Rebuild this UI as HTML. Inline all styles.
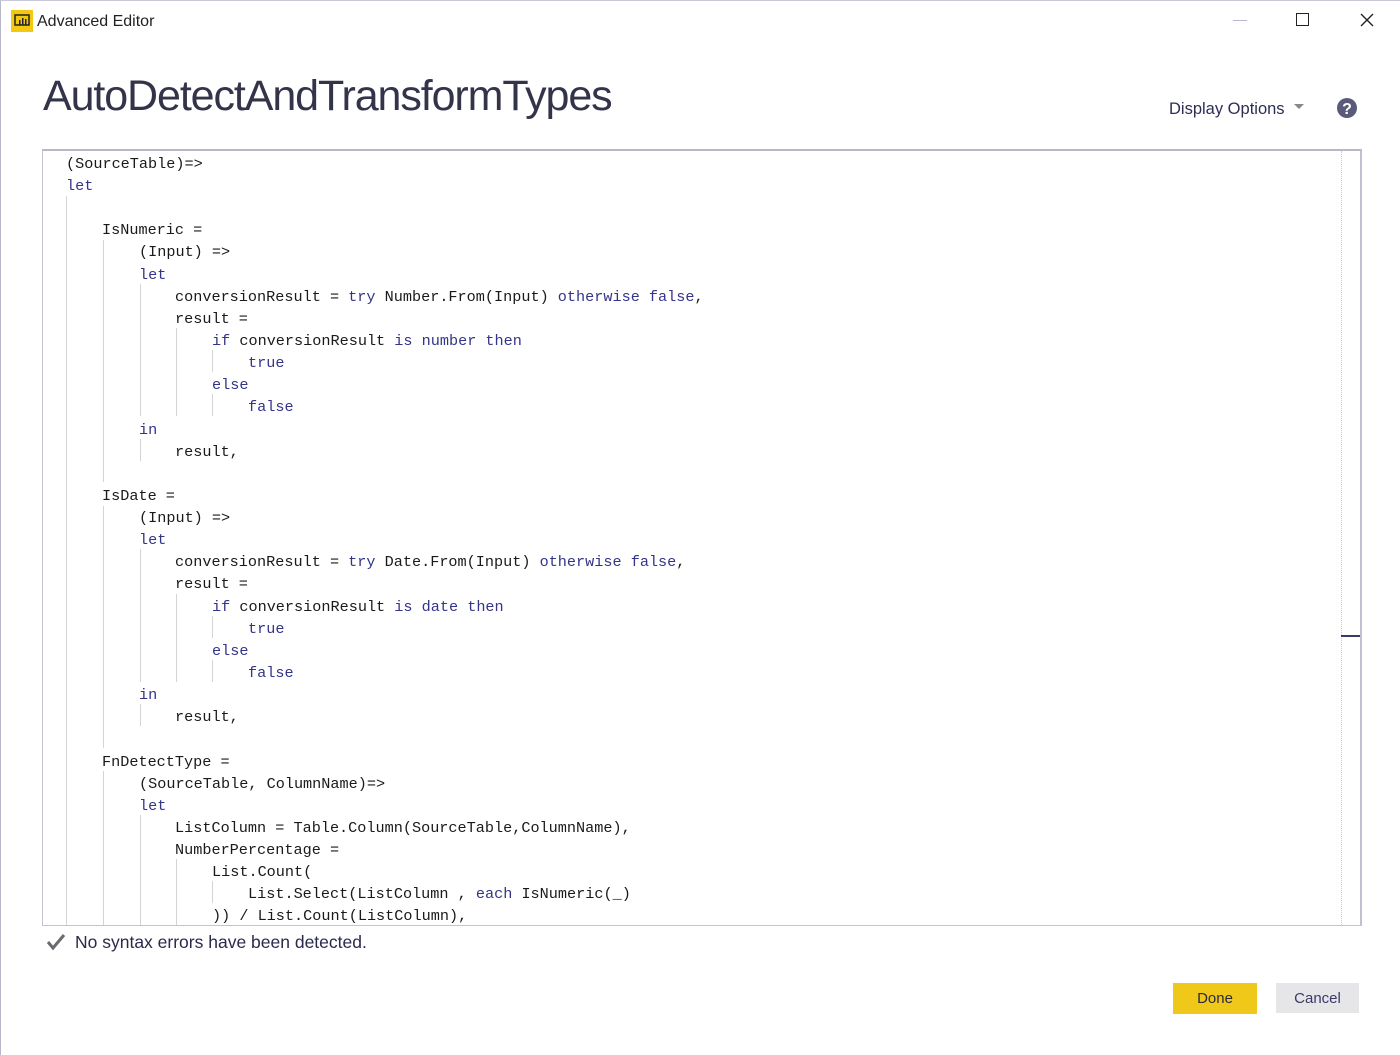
<!DOCTYPE html>
<html><head><meta charset="utf-8"><style>
*{margin:0;padding:0;box-sizing:border-box}
body{width:1400px;height:1055px;background:#fff;position:relative;overflow:hidden;font-family:"Liberation Sans",sans-serif}
.abs{position:absolute}
.ln{position:absolute;height:22px;line-height:22px;font-family:"Liberation Mono",monospace;font-size:15.2px;color:#1a1a1a;white-space:pre;margin-top:2px}
.k{color:#34348a}
.g{position:absolute;width:1px;background:#d4d4d8}
</style></head><body>
<div class="abs" style="left:0;top:0;width:1px;height:1055px;background:#b8b8c8"></div>
<div class="abs" style="left:0;top:0;width:1400px;height:1px;background:#c8c8d8"></div>
<div class="abs" style="left:11px;top:10px;width:22px;height:22px;background:#f2c811"></div>
<svg class="abs" style="left:11px;top:10px" width="22" height="22" viewBox="0 0 22 22"><rect x="4" y="5" width="14" height="10" fill="none" stroke="#222" stroke-width="1.5"/><rect x="8" y="10" width="1.5" height="5" fill="#222"/><rect x="11" y="8" width="1.5" height="7" fill="#222"/><rect x="14" y="9" width="1.5" height="6" fill="#222"/></svg>
<div class="abs" style="left:37px;top:13px;font-size:16px;color:#222">Advanced Editor</div>
<div class="abs" style="left:1233px;top:20px;width:14px;height:1px;background:#b8b8d0"></div>
<div class="abs" style="left:1296px;top:13px;width:13px;height:13px;border:1.5px solid #222"></div>
<svg class="abs" style="left:1360px;top:13px" width="14" height="14"><path d="M1 1L13 13M13 1L1 13" stroke="#222" stroke-width="1.4"/></svg>
<div class="abs" style="left:43px;top:72px;font-size:43px;color:#33334a;letter-spacing:-1.1px">AutoDetectAndTransformTypes</div>
<div class="abs" style="left:1169px;top:100px;font-size:16.5px;color:#2e2e55">Display Options</div>
<svg class="abs" style="left:1294px;top:104px" width="10" height="6"><path d="M0 0H10L5 5Z" fill="#888"/></svg>
<svg class="abs" style="left:1336px;top:97px" width="22" height="22"><circle cx="11" cy="11" r="10" fill="#5a5a7a"/><text x="11" y="17" text-anchor="middle" font-family="Liberation Sans" font-weight="bold" font-size="16" fill="#fff">?</text></svg>
<div class="abs" style="left:42px;top:149px;width:1320px;height:777px;border:1px solid #c4c4d0;border-top:2px solid #b8b8c8;border-right:2px solid #c0c0d0"></div>
<div class="abs" style="left:1341px;top:151px;width:1px;height:774px;border-left:1px dotted #ccc"></div>
<div class="abs" style="left:1341px;top:635px;width:19px;height:2px;background:#3a3a6a"></div>
<div class="g" style="left:66px;top:196px;height:729px"></div>
<div class="g" style="left:103px;top:240px;height:242px"></div>
<div class="g" style="left:103px;top:506px;height:242px"></div>
<div class="g" style="left:103px;top:771px;height:154px"></div>
<div class="g" style="left:140px;top:284px;height:132px"></div>
<div class="g" style="left:140px;top:439px;height:22px"></div>
<div class="g" style="left:140px;top:549px;height:133px"></div>
<div class="g" style="left:140px;top:704px;height:22px"></div>
<div class="g" style="left:140px;top:815px;height:110px"></div>
<div class="g" style="left:176px;top:328px;height:88px"></div>
<div class="g" style="left:176px;top:594px;height:88px"></div>
<div class="g" style="left:176px;top:859px;height:66px"></div>
<div class="g" style="left:212px;top:350px;height:22px"></div>
<div class="g" style="left:212px;top:394px;height:22px"></div>
<div class="g" style="left:212px;top:616px;height:22px"></div>
<div class="g" style="left:212px;top:660px;height:22px"></div>
<div class="g" style="left:212px;top:881px;height:22px"></div>

<div class="ln" style="left:66px;top:151px">(SourceTable)=&gt;</div>
<div class="ln k" style="left:66px;top:173px">let</div>
<div class="ln" style="left:102px;top:217px">IsNumeric =</div>
<div class="ln" style="left:139px;top:239px">(Input) =&gt;</div>
<div class="ln k" style="left:139px;top:262px">let</div>
<div class="ln" style="left:175px;top:284px">conversionResult = <span class="k">try</span> Number.From(Input) <span class="k">otherwise false</span>,</div>
<div class="ln" style="left:175px;top:306px">result =</div>
<div class="ln" style="left:212px;top:328px"><span class="k">if</span> conversionResult <span class="k">is number then</span></div>
<div class="ln k" style="left:248px;top:350px">true</div>
<div class="ln k" style="left:212px;top:372px">else</div>
<div class="ln k" style="left:248px;top:394px">false</div>
<div class="ln k" style="left:139px;top:417px">in</div>
<div class="ln" style="left:175px;top:439px">result,</div>
<div class="ln" style="left:102px;top:483px">IsDate =</div>
<div class="ln" style="left:139px;top:505px">(Input) =&gt;</div>
<div class="ln k" style="left:139px;top:527px">let</div>
<div class="ln" style="left:175px;top:549px">conversionResult = <span class="k">try</span> Date.From(Input) <span class="k">otherwise false</span>,</div>
<div class="ln" style="left:175px;top:571px">result =</div>
<div class="ln" style="left:212px;top:594px"><span class="k">if</span> conversionResult <span class="k">is date then</span></div>
<div class="ln k" style="left:248px;top:616px">true</div>
<div class="ln k" style="left:212px;top:638px">else</div>
<div class="ln k" style="left:248px;top:660px">false</div>
<div class="ln k" style="left:139px;top:682px">in</div>
<div class="ln" style="left:175px;top:704px">result,</div>
<div class="ln" style="left:102px;top:749px">FnDetectType =</div>
<div class="ln" style="left:139px;top:771px">(SourceTable, ColumnName)=&gt;</div>
<div class="ln k" style="left:139px;top:793px">let</div>
<div class="ln" style="left:175px;top:815px">ListColumn = Table.Column(SourceTable,ColumnName),</div>
<div class="ln" style="left:175px;top:837px">NumberPercentage =</div>
<div class="ln" style="left:212px;top:859px">List.Count(</div>
<div class="ln" style="left:248px;top:881px">List.Select(ListColumn , <span class="k">each</span> IsNumeric(_)</div>
<div class="ln" style="left:212px;top:903px">)) / List.Count(ListColumn),</div>

<svg class="abs" style="left:46px;top:933px" width="20" height="18"><path d="M2 9L7 15L18 2" fill="none" stroke="#6a6a70" stroke-width="3"/></svg>
<div class="abs" style="left:75px;top:932px;font-size:17.5px;color:#2a2a4a">No syntax errors have been detected.</div>
<div class="abs" style="left:1173px;top:983px;width:84px;height:31px;background:#f0c81a;font-size:15px;color:#2a2a3a;text-align:center;line-height:31px">Done</div>
<div class="abs" style="left:1276px;top:983px;width:83px;height:30px;background:#e6e6e8;font-size:15px;color:#3a3a6a;text-align:center;line-height:31px">Cancel</div>
</body></html>
